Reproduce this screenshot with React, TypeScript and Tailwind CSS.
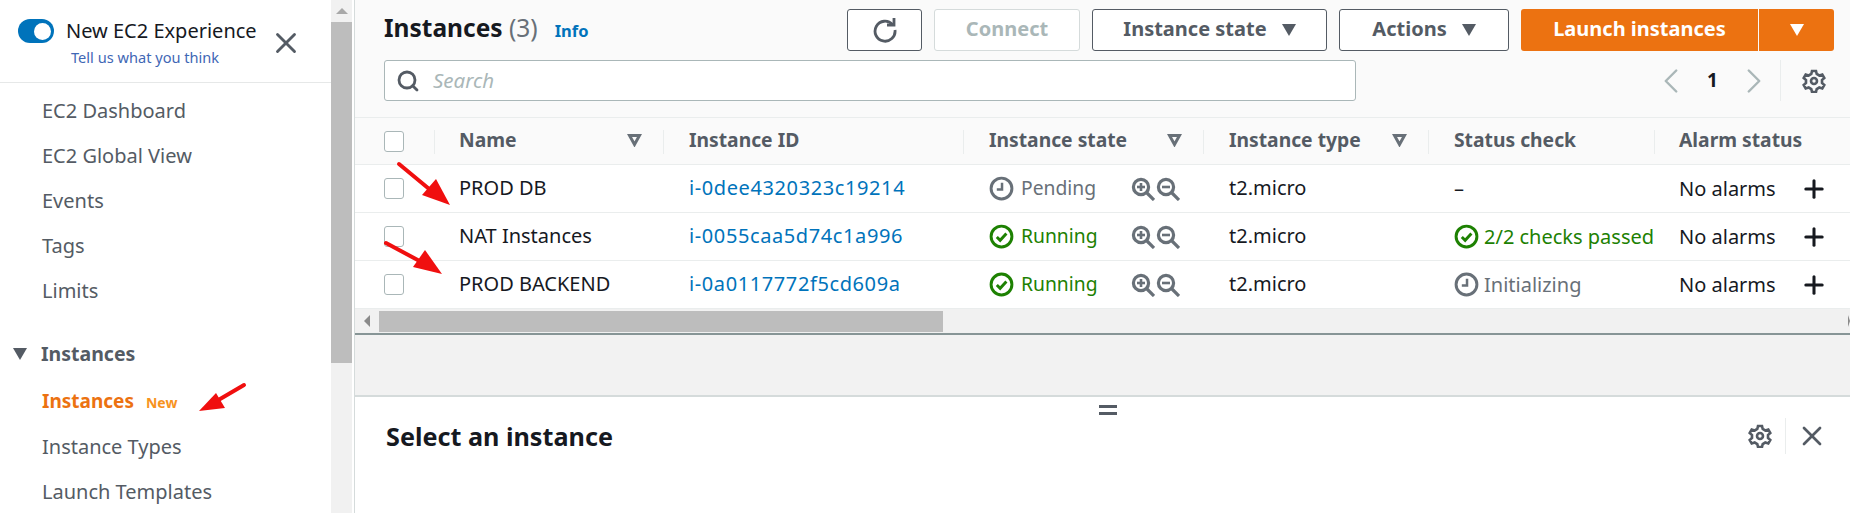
import { ChevronLeft, ChevronRight, Plus, Search, X } from "lucide-react";

const navTop = ["EC2 Dashboard", "EC2 Global View", "Events", "Tags", "Limits"];

const rows = [
  { name: "PROD DB", id: "i-0dee4320323c19214", state: "Pending", status: "" },
  { name: "NAT Instances", id: "i-0055caa5d74c1a996", state: "Running", status: "passed" },
  { name: "PROD BACKEND", id: "i-0a0117772f5cd609a", state: "Running", status: "init" },
];

const columns = "grid grid-cols-[79px_229px_300px_240px_225px_226px_196px]";

const ClockIcon = () => (
  <svg width="25" height="25" viewBox="0 0 24 24" fill="none" stroke="#687078" strokeWidth="2.8" className="shrink-0">
    <circle cx="12" cy="12" r="10" />
    <path d="M12.5 6.5v6.5H7.5" strokeWidth="2.4" />
  </svg>
);

const CheckIcon = () => (
  <svg width="25" height="25" viewBox="0 0 24 24" fill="none" stroke="#1d8102" strokeWidth="2.8" className="shrink-0">
    <circle cx="12" cy="12" r="10" />
    <path d="M7.5 12.5l3.2 3.2 6-6.5" />
  </svg>
);

const ZoomIcon = ({ plus }: { plus?: boolean }) => (
  <svg width="24" height="24" viewBox="0 0 24 24" fill="none" stroke="#687078" strokeWidth="3.2" className="shrink-0">
    <circle cx="10" cy="10" r="7.6" />
    <path d="M16 16l7 7" />
    <path d="M6 10h8" strokeWidth="2.6" />
    {plus && <path d="M10 6v8" strokeWidth="2.6" />}
  </svg>
);

const GearIcon = () => (
  <svg width="24" height="24" viewBox="0 0 24 24" fill="none" stroke="#545b64" strokeWidth="2.6">
    <circle cx="12" cy="12" r="3" />
    <path d="M10 2h4l.7 3 2.6 1.5 3-.9 2 3.4-2.3 2.1v2.8l2.3 2.1-2 3.4-3-.9-2.6 1.5-.7 3h-4l-.7-3-2.6-1.5-3 .9-2-3.4 2.3-2.1v-2.8L1.7 9l2-3.4 3 .9L9.3 5z" />
  </svg>
);

const RefreshIcon = () => (
  <svg width="26" height="26" viewBox="0 0 26 26" fill="none" stroke="#545b64" strokeWidth="2.8">
    <path d="M20.5 7.5A10 10 0 1 0 23 13" />
    <path d="M15 8h7V1" />
  </svg>
);

const Caret = ({ className }: { className: string }) => (
  <span className={`inline-block w-0 h-0 border-x-[7px] border-x-transparent border-t-[12px] ${className}`} />
);

const SortCaret = () => (
  <svg width="15" height="13" viewBox="0 0 15 13" fill="none" stroke="#687078" strokeWidth="3" className="mr-[21px] shrink-0">
    <path d="M2.5 1.5h10L7.5 10.5z" />
  </svg>
);

const Checkbox = () => (
  <span className="block w-[20px] h-[21px] bg-white border-[1.5px] border-[#aab7b8] rounded-[3px]" />
);

const HeadCell = ({ label, sort, left = 26 }: { label: string; sort?: boolean; left?: number }) => (
  <div className={`relative flex items-center justify-between pb-[2px] ${left === 25 ? "pl-[25px]" : "pl-[26px]"}`}>
    <span className="absolute left-0 top-[12px] h-[24px] border-l border-[#eaeded]" />
    <span className="font-bold text-[#545b64] whitespace-nowrap">{label}</span>
    {sort && <SortCaret />}
  </div>
);

const Arrows = () => (
  <svg className="absolute inset-0 pointer-events-none" width="1850" height="513" viewBox="0 0 1850 513" fill="#f00f0f">
    <path d="M399 164L434 193" stroke="#f00f0f" strokeWidth="4" strokeLinecap="round" />
    <polygon points="450,205 422,195 436,179" />
    <path d="M386 243L427 265" stroke="#f00f0f" strokeWidth="4" strokeLinecap="round" />
    <polygon points="442,274 413,267 425,250" />
    <path d="M244 385L215 402" stroke="#f00f0f" strokeWidth="4" strokeLinecap="round" />
    <polygon points="199,411 216,393 225,408" />
  </svg>
);

const Sidebar = () => (
  <aside className="w-[331px] shrink-0 bg-white h-full text-[#545b64] text-[20px]">
    <div className="relative h-[83px] border-b border-[#e6e8e8]">
      <div className="flex items-center pl-[18px] pt-[19px]">
        <span className="flex items-center justify-end w-[36px] h-[24px] rounded-full bg-[#0073bb] pr-[3px]">
          <span className="block w-[17px] h-[17px] rounded-full bg-white" />
        </span>
        <span className="ml-[12px] text-[#16191f] leading-[24px]">New EC2 Experience</span>
      </div>
      <p className="pl-[71px] mt-[2px] text-[14.6px] leading-[24px] text-[#3f67b5]">Tell us what you think</p>
      <X className="absolute left-[269px] top-[26px]" size={34} strokeWidth={2} color="#545b64" />
    </div>
    <ul className="pt-[5px] pl-[42px]">
      {navTop.map((item) => (
        <li key={item} className="h-[45px] leading-[45px]">{item}</li>
      ))}
    </ul>
    <div className="flex items-center h-[46px] mt-[18px] pl-[13px] font-bold text-[19.5px]">
      <Caret className="border-t-[#545b64] mr-[14px]" />
      Instances
    </div>
    <ul className="pl-[42px]">
      <li className="h-[46px] leading-[46px] mt-[1px] font-bold text-[19px] text-[#ec7211]">
        Instances<span className="ml-[12px] text-[14px] text-[#f7931e]">New</span>
      </li>
      <li className="h-[45px] leading-[45px]">Instance Types</li>
      <li className="h-[45px] leading-[45px]">Launch Templates</li>
    </ul>
  </aside>
);

const SideScrollbar = () => (
  <div className="w-[21px] shrink-0 h-full bg-[#f1f1f1] flex flex-col items-center mr-[2px]">
    <div className="h-[22px] flex items-center justify-center">
      <span className="block w-0 h-0 border-x-[6px] border-x-transparent border-b-[6px] border-b-[#a8a8a8]" />
    </div>
    <div className="w-full h-[341px] bg-[#bdbdbd]" />
  </div>
);

const Toolbar = () => (
  <div className="bg-[#fafafa] h-[117px] pl-[29px] pr-[16px] pt-[9px]">
    <div className="flex items-center h-[42px]">
      <h1 className="text-[24.5px] font-bold text-[#16191f] leading-none pb-[3px]">
        Instances <span className="font-normal text-[#687078]">(3)</span>
      </h1>
      <span className="ml-[17px] mt-[2px] text-[16.5px] font-bold text-[#0073bb]">Info</span>
      <div className="ml-auto flex items-center gap-[12px] h-full font-bold text-[20px]">
        <button className="flex items-center justify-center w-[75px] h-full bg-white border border-[#545b64] rounded-[3px]">
          <RefreshIcon />
        </button>
        <button className="w-[146px] h-full pb-[2px] bg-white border border-[#d5dbdb] rounded-[3px] text-[#aab7b8]">Connect</button>
        <button className="flex items-center justify-center gap-[15px] w-[235px] h-full pb-[2px] bg-white border border-[#545b64] rounded-[3px] text-[#545b64]">
          Instance state <Caret className="border-t-[#545b64] mt-[2px]" />
        </button>
        <button className="flex items-center justify-center gap-[15px] w-[170px] h-full pb-[2px] bg-white border border-[#545b64] rounded-[3px] text-[#545b64]">
          Actions <Caret className="border-t-[#545b64] mt-[2px]" />
        </button>
        <div className="flex gap-px h-full">
          <button className="w-[237px] h-full pb-[2px] bg-[#ec7211] rounded-l-[3px] text-white">Launch instances</button>
          <button className="flex items-center justify-center w-[75px] h-full bg-[#ec7211] rounded-r-[3px]">
            <Caret className="border-t-white" />
          </button>
        </div>
      </div>
    </div>
    <div className="flex items-center h-[41px] mt-[9px]">
      <div className="flex items-center w-[972px] h-full bg-white border border-[#aab7b8] rounded-[3px] pl-[11px]">
        <Search size={24} strokeWidth={2.8} color="#545b64" />
        <span className="ml-[13px] text-[20.5px] italic text-[#aab7b8]">Search</span>
      </div>
      <div className="ml-auto mr-[8px] flex items-center h-full">
        <ChevronLeft size={42} strokeWidth={1.4} color="#aab7b8" />
        <span className="w-[41px] text-center text-[19px] font-bold text-[#16191f]">1</span>
        <ChevronRight size={42} strokeWidth={1.4} color="#aab7b8" />
        <span className="h-full ml-[5px] border-l border-[#eaeded]" />
        <span className="ml-[21px]"><GearIcon /></span>
      </div>
    </div>
  </div>
);

const InstancesTable = () => (
  <div className="text-[20px]">
    <div className={`${columns} h-[48px] bg-[#fafafa] border-y border-[#eaeded] text-[19.3px]`}>
      <div className="flex items-center pl-[29px]"><Checkbox /></div>
      <HeadCell label="Name" sort left={25} />
      <HeadCell label="Instance ID" />
      <HeadCell label="Instance state" sort />
      <HeadCell label="Instance type" sort />
      <HeadCell label="Status check" />
      <HeadCell label="Alarm status" left={25} />
    </div>
    {rows.map((row) => (
      <div key={row.id} className={`${columns} h-[48px] bg-white border-b border-[#eaeded] text-[#16191f]`}>
        <div className="flex items-center pl-[29px]"><Checkbox /></div>
        <div className="flex items-center pl-[25px] pb-[1px] whitespace-nowrap">{row.name}</div>
        <div className="flex items-center pl-[26px] pb-[1px] text-[#0073bb] tracking-[0.6px]">{row.id}</div>
        <div className="flex items-center pl-[26px]">
          {row.state === "Running" ? <CheckIcon /> : <ClockIcon />}
          <span className={`ml-[7px] w-[110px] text-[19.3px] ${row.state === "Running" ? "text-[#1d8102]" : "text-[#687078]"}`}>{row.state}</span>
          <ZoomIcon plus />
          <span className="ml-[1px]"><ZoomIcon /></span>
        </div>
        <div className="flex items-center pl-[26px] pb-[1px]">t2.micro</div>
        <div className="flex items-center pl-[26px] whitespace-nowrap">
          {row.status === "passed" && <><CheckIcon /><span className="ml-[5px] text-[#1d8102]">2/2 checks passed</span></>}
          {row.status === "init" && <><ClockIcon /><span className="ml-[5px] text-[#687078]">Initializing</span></>}
          {row.status === "" && <span>–</span>}
        </div>
        <div className="flex items-center pl-[25px] whitespace-nowrap">
          No alarms
          <Plus className="ml-[24px]" size={28} strokeWidth={2.6} color="#16191f" />
        </div>
      </div>
    ))}
    <div className="flex items-center h-[26px] bg-[#f1f1f1] border-b-2 border-[#879596]">
      <div className="flex items-center justify-center w-[24px] h-full">
        <span className="block w-0 h-0 border-y-[6px] border-y-transparent border-r-[6px] border-r-[#8a8a8a]" />
      </div>
      <div className="w-[564px] h-[21px] bg-[#bdbdbd]" />
      <span className="ml-auto block w-0 h-0 border-y-[6px] border-y-transparent border-l-[2px] border-l-[#8a8a8a]" />
    </div>
  </div>
);

const DetailsPane = () => (
  <div className="relative flex-1 bg-white border-t-2 border-[#d5dbdb]">
    <div className="flex justify-center pt-[8px] pl-[10px]">
      <div className="flex flex-col gap-[4px]">
        <span className="block w-[18px] h-[3px] bg-[#545b64]" />
        <span className="block w-[18px] h-[3px] bg-[#545b64]" />
      </div>
    </div>
    <div className="flex items-center pl-[31px] pr-[22px] mt-[3px]">
      <h2 className="text-[25.2px] font-bold text-[#16191f] leading-[36px]">Select an instance</h2>
      <div className="ml-auto flex items-center h-[36px]">
        <GearIcon />
        <span className="h-full ml-[13px] mr-[10px] border-l border-[#eaeded]" />
        <X size={32} strokeWidth={2} color="#545b64" />
      </div>
    </div>
  </div>
);

export default function App() {
  return (
    <div className="relative flex w-[1850px] h-[513px] overflow-hidden bg-white font-['Noto_Sans',sans-serif]">
      <Sidebar />
      <SideScrollbar />
      <main className="flex flex-col flex-1 min-w-0 border-l border-[#d5dbdb]">
        <Toolbar />
        <InstancesTable />
        <div className="h-[60px] bg-[#f2f2f2]" />
        <DetailsPane />
      </main>
      <Arrows />
    </div>
  );
}
